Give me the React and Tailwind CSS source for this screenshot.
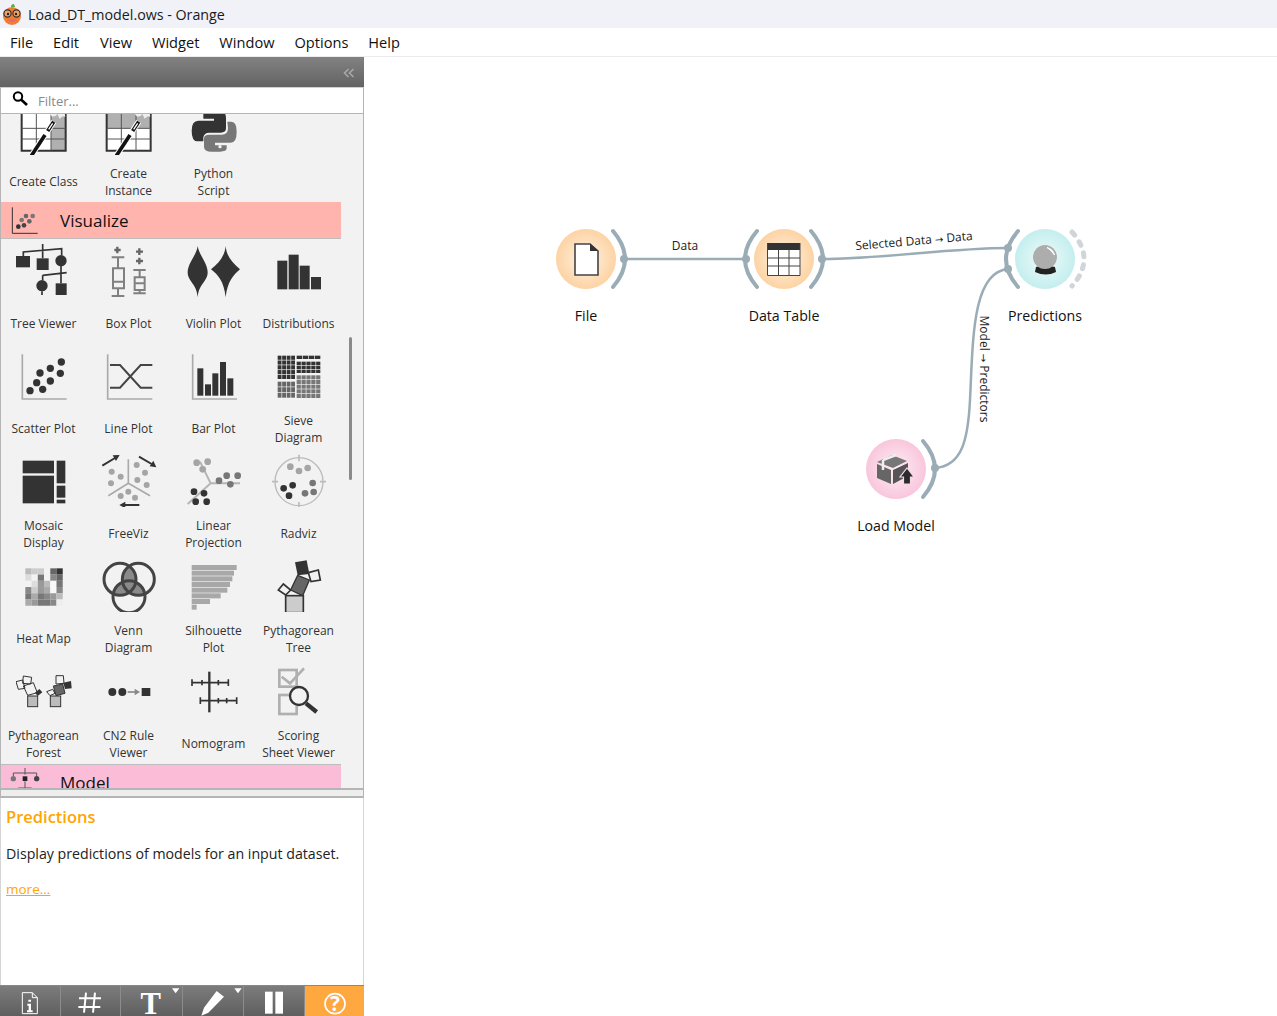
const D = "#333";
const G = "#aaa";
const ARROW = "'DejaVu Sans', sans-serif";
const LABEL = "'Open Sans', sans-serif";

function Icon({ x, y, children }) {
  return (
    <svg viewBox={`${x} ${y} 168 168`} className="w-[56px] h-[56px] shrink-0" fill="none">
      {children}
    </svg>
  );
}

function Grid({ x, y, w, h, nx, ny, fill }) {
  const cells = [];
  const cw = w / nx;
  const ch = h / ny;
  for (let i = 0; i < nx; i++) {
    for (let j = 0; j < ny; j++) {
      cells.push(<rect key={`${i}-${j}`} x={x + i * cw} y={y + j * ch} width={cw - 2} height={ch - 2} fill={fill} />);
    }
  }
  return <g>{cells}</g>;
}

const heat = [
  ["#bbb", "#ccc", "#ccc", "#f2f2f2", "#666", "#333"],
  ["#ddd", "#f2f2f2", "#777", "#f2f2f2", "#888", "#666"],
  ["#f2f2f2", "#ddd", "#999", "#bbb", "#f8f8f8", "#777"],
  ["#888", "#ccc", "#999", "#aaa", "#f8f8f8", "#888"],
  ["#777", "#aaa", "#777", "#888", "#999", "#bbb"],
  ["#aaa", "#999", "#777", "#777", "#888", "#eee"],
];

function CreateTable({ x0, shaded }) {
  return (
    <g>
      <rect x={x0} y="340" width="132" height="112" fill="#fff" />
      {shaded === "col" && <rect x={x0 + 88} y="340" width="44" height="112" fill="#b0b0b0" />}
      {shaded === "row" && <rect x={x0} y="340" width="132" height="45" fill="#b0b0b0" />}
      <path d={`M${x0} 340V452H${x0 + 132}V340`} stroke={D} strokeWidth="6" />
      <path d={`M${x0} 385H${x0 + 132}M${x0} 417H${x0 + 132}M${x0 + 44} 340V452M${x0 + 88} 340V452`} stroke="#555" strokeWidth="3" />
      <path d={`M${x0 + 26} 472L${x0 + 96} 365`} stroke="#fff" strokeWidth="17" />
      <path d={`M${x0 + 26} 472L${x0 + 70} 405`} stroke="#111" strokeWidth="11" />
      <path d={`M${x0 + 78} 393L${x0 + 96} 365`} stroke="#111" strokeWidth="11" />
      <path d={`M${x0 + 81} 388L${x0 + 93} 370`} stroke="#fff" strokeWidth="4" />
      <path d={`M${x0 + 82} 340l10 10 11-3 5 -7zM${x0 + 106} 340l8 16 9-7 8 1 -2-10z`} fill="#eee" />
    </g>
  );
}

const rows = [
  [
    { label: ["Create Class"], icon: <Icon x={48} y={297}><CreateTable x0={65} shaded="col" /></Icon> },
    { label: ["Create", "Instance"], icon: <Icon x={303} y={297}><CreateTable x0={320} shaded="row" /></Icon> },
    {
      label: ["Python", "Script"],
      icon: (
        <Icon x={558} y={297}>
          <path d="M610 340H672Q678 340 678 355V385Q678 398 662 398H628Q612 398 610 412V424H592Q575 424 575 392Q575 362 595 362H642V356H610Z" fill={D} />
          <path d="M682 365H694Q710 365 710 395Q710 428 692 428H645V436H680V445Q680 455 660 455H635Q612 455 612 440V415Q612 404 628 404H665Q684 404 684 385Z" fill="#777" />
          <circle cx="660" cy="440" r="5" fill="#f2f2f2" />
        </Icon>
      ),
    },
    null,
  ],
];

const vizRows = [
  [
    {
      label: ["Tree Viewer"],
      icon: (
        <Icon x={48} y={3}>
          <g stroke={D} strokeWidth="5">
            <path d="M128 12V55M70 48V36L185 26V46M183 78V130M128 106L200 98M128 106V120M126 154V165" />
          </g>
          <rect x="48" y="48" width="42" height="34" fill={D} />
          <rect x="110" y="55" width="36" height="35" fill={D} />
          <circle cx="183" cy="62" r="17" fill={D} />
          <circle cx="126" cy="137" r="17" fill={D} />
          <rect x="167" y="130" width="33" height="35" fill={D} />
        </Icon>
      ),
    },
    {
      label: ["Box Plot"],
      icon: (
        <Icon x={303} y={3}>
          <path d="M343 30H362M352 20V40" stroke="#666" strokeWidth="7" />
          <path d="M335 52H373M354 52V85M339 85H372V145H339ZM339 125H372M354 145V168M335 168H373" stroke="#808080" strokeWidth="6" />
          <path d="M408 35H429M418 25V45M408 63H429M418 53V73" stroke="#666" strokeWidth="7" />
          <path d="M400 90H437M419 90V112M404 112H434V150H404ZM404 130H434M419 150V160M400 160H437" stroke="#808080" strokeWidth="6" />
        </Icon>
      ),
    },
    {
      label: ["Violin Plot"],
      icon: (
        <Icon x={558} y={3}>
          <path d="M593 18C597 45 623 70 623 97C623 125 597 130 593 172C590 130 563 125 563 97C563 70 590 45 593 18Z" fill={D} />
          <path d="M677 18C680 50 695 65 720 88C700 105 682 125 677 172C672 125 655 105 633 88C655 70 674 50 677 18Z" fill={D} />
        </Icon>
      ),
    },
    {
      label: ["Distributions"],
      icon: (
        <Icon x={813} y={3}>
          <rect x="832" y="62" width="30" height="86" fill={D} />
          <rect x="866" y="44" width="30" height="104" fill={D} />
          <rect x="899" y="77" width="30" height="71" fill={D} />
          <rect x="933" y="111" width="30" height="37" fill={D} />
        </Icon>
      ),
    },
  ],
  [
    {
      label: ["Scatter Plot"],
      icon: (
        <Icon x={48} y={318}>
          <path d="M67 343V477H200" stroke={G} strokeWidth="5" />
          {[[90, 452], [128, 448], [110, 428], [151, 423], [120, 399], [151, 385], [181, 400], [184, 366]].map(([cx, cy]) => (
            <circle key={cx + "-" + cy} cx={cx} cy={cy} r="11" fill={D} />
          ))}
        </Icon>
      ),
    },
    {
      label: ["Line Plot"],
      icon: (
        <Icon x={303} y={318}>
          <path d="M323 343V477H457" stroke={G} strokeWidth="5" />
          <path d="M330 375H360L422 443H457M330 443H360L422 375H457" stroke="#444" strokeWidth="6" />
        </Icon>
      ),
    },
    {
      label: ["Bar Plot"],
      icon: (
        <Icon x={558} y={318}>
          <path d="M578 343V477H711" stroke={G} strokeWidth="5" />
          <rect x="592" y="385" width="18" height="82" fill={D} />
          <rect x="615" y="433" width="18" height="34" fill={D} />
          <rect x="637" y="400" width="18" height="67" fill={D} />
          <rect x="660" y="366" width="18" height="101" fill={D} />
          <rect x="682" y="415" width="18" height="52" fill={D} />
        </Icon>
      ),
    },
    {
      label: ["Sieve", "Diagram"],
      icon: (
        <Icon x={813} y={318}>
          <Grid x={833} y={347} w={54} h={72} nx={4} ny={5} fill={D} />
          <Grid x={890} y={347} w={73} h={12} nx={4} ny={1} fill={D} />
          <Grid x={890} y={365} w={73} h={36} nx={5} ny={3} fill={D} />
          <Grid x={833} y={425} w={54} h={50} nx={4} ny={3} fill="#666" />
          <Grid x={890} y={406} w={73} h={70} nx={5} ny={5} fill="#777" />
        </Icon>
      ),
    },
  ],
  [
    {
      label: ["Mosaic", "Display"],
      icon: (
        <Icon x={48} y={3}>
          <rect x="68" y="32" width="94" height="38" fill={D} />
          <rect x="68" y="77" width="94" height="83" fill={D} />
          <rect x="170" y="32" width="26" height="68" fill={D} />
          <rect x="170" y="107" width="26" height="36" fill={D} />
          <rect x="170" y="149" width="26" height="11" fill={D} />
        </Icon>
      ),
    },
    {
      label: ["FreeViz"],
      icon: (
        <Icon x={303} y={3}>
          <path d="M385 28V100L325 137M385 100L450 137" stroke={G} strokeWidth="5" />
          {[[335, 65], [362, 80], [333, 100], [410, 45], [435, 68], [412, 90], [440, 105], [385, 125], [362, 138], [405, 143]].map(([cx, cy]) => (
            <circle key={cx} cx={cx} cy={cy} r="9" fill="#a5a5a5" />
          ))}
          <path d="M307 47L345 24M417 20L455 42M418 165H372" stroke={D} strokeWidth="6" />
          <path d="M359 15L338 16L348 33ZM469 52L460 32L449 49ZM358 165L376 155V175Z" fill={D} />
        </Icon>
      ),
    },
    {
      label: ["Linear", "Projection"],
      icon: (
        <Icon x={558} y={3}>
          <path d="M600 35L632 100M632 100H720M632 100L563 162" stroke="#b5b5b5" strokeWidth="6" />
          {[[590, 38], [623, 35], [608, 58]].map(([cx, cy]) => <circle key={cx} cx={cx} cy={cy} r="10" fill="#a5a5a5" />)}
          {[[657, 92], [680, 77], [713, 77], [691, 103]].map(([cx, cy]) => <circle key={cx} cx={cx} cy={cy} r="10" fill="#777" />)}
          {[[582, 125], [612, 130], [587, 155], [620, 155]].map(([cx, cy]) => <circle key={cx} cx={cx} cy={cy} r="10" fill={D} />)}
        </Icon>
      ),
    },
    {
      label: ["Radviz"],
      icon: (
        <Icon x={813} y={3}>
          <circle cx="897" cy="95" r="72" stroke="#bbb" strokeWidth="4" />
          <path d="M897 14V34M897 156V176M816 95H834M960 95H978" stroke="#bbb" strokeWidth="5" />
          {[[871, 50], [897, 63], [923, 54]].map(([cx, cy]) => <circle key={cx} cx={cx} cy={cy} r="10" fill="#a5a5a5" />)}
          {[[851, 115], [878, 106], [867, 137]].map(([cx, cy]) => <circle key={cx} cx={cx} cy={cy} r="10" fill={D} />)}
          {[[938, 99], [915, 130], [941, 126]].map(([cx, cy]) => <circle key={cx} cx={cx} cy={cy} r="10" fill="#777" />)}
        </Icon>
      ),
    },
  ],
  [
    {
      label: ["Heat Map"],
      icon: (
        <Icon x={48} y={318}>
          {heat.map((row, j) =>
            row.map((c, i) => <rect key={`${i}-${j}`} x={76 + i * 18.7} y={355 + j * 18.7} width="18.7" height="18.7" fill={c} />)
          )}
        </Icon>
      ),
    },
    {
      label: ["Venn", "Diagram"],
      icon: (
        <Icon x={303} y={318}>
          <defs>
            <clipPath id="vl"><circle cx="360" cy="388" r="48" /></clipPath>
            <clipPath id="vr"><circle cx="415" cy="388" r="48" /></clipPath>
          </defs>
          <circle cx="415" cy="388" r="48" fill="#8a8a8a" clipPath="url(#vl)" />
          <circle cx="387" cy="440" r="48" fill="#8a8a8a" clipPath="url(#vl)" />
          <circle cx="387" cy="440" r="48" fill="#8a8a8a" clipPath="url(#vr)" />
          <circle cx="360" cy="388" r="48" stroke="#444" strokeWidth="9" />
          <circle cx="415" cy="388" r="48" stroke="#444" strokeWidth="9" />
          <circle cx="387" cy="440" r="48" stroke="#444" strokeWidth="9" />
        </Icon>
      ),
    },
    {
      label: ["Silhouette", "Plot"],
      icon: (
        <Icon x={558} y={318}>
          {[135, 127, 122, 115, 107, 87, 55, 15].map((w, i) => (
            <rect key={i} x="575" y={345 + i * 17} width={w} height="15" fill="#a8a8a8" />
          ))}
        </Icon>
      ),
    },
    {
      label: ["Pythagorean", "Tree"],
      icon: (
        <Icon x={813} y={318}>
          <path d="M885 337L920 331L928 372L893 376Z" fill={D} />
          <path d="M893 376L928 390L908 437L872 420Z" fill="#666" stroke={D} strokeWidth="4" />
          <path d="M925 368L955 360L961 390L933 395Z" stroke={D} strokeWidth="5" />
          <path d="M850 402L872 420L857 435L835 420Z" stroke={D} strokeWidth="5" />
          <rect x="857" y="437" width="53" height="51" fill="#ccc" stroke={D} strokeWidth="5" />
        </Icon>
      ),
    },
  ],
  [
    {
      label: ["Pythagorean", "Forest"],
      icon: (
        <Icon x={48} y={3}>
          <g stroke={D} strokeWidth="3">
            <rect x="83" y="108" width="30" height="32" fill="#bbb" />
            <path d="M70 78L100 68L112 98L83 106Z" />
            <path d="M48 65L68 60L75 85L55 88Z" />
            <path d="M70 48L95 52L92 72L68 70Z" />
            <rect x="151" y="108" width="31" height="32" fill="#bbb" />
            <path d="M160 78L188 72L195 100L168 107Z" fill="#666" />
            <path d="M168 47L190 47L192 70L168 72Z" />
            <path d="M140 95L158 88L165 100L150 107Z" />
          </g>
          <path d="M105 98L118 87L127 97L113 108ZM190 68L213 63L215 85L195 87Z" fill={D} />
        </Icon>
      ),
    },
    {
      label: ["CN2 Rule", "Viewer"],
      icon: (
        <Icon x={303} y={3}>
          <circle cx="337" cy="96" r="12" fill={D} />
          <circle cx="367" cy="96" r="12" fill={D} />
          <path d="M383 96H408" stroke="#888" strokeWidth="5" />
          <path d="M420 96L404 86V106Z" fill="#888" />
          <rect x="425" y="84" width="26" height="24" fill={D} />
        </Icon>
      ),
    },
    {
      label: ["Nomogram"],
      icon: (
        <Icon x={558} y={3}>
          <path d="M628 35V157" stroke={D} strokeWidth="7" />
          <path d="M575 68H687M600 122H712M576 58V78M606 60V76M655 60V76M685 58V78M601 112V132M655 114V130M680 114V130M710 112V132" stroke={D} strokeWidth="5" />
        </Icon>
      ),
    },
    {
      label: ["Scoring", "Sheet Viewer"],
      icon: (
        <Icon x={813} y={3}>
          <rect x="838" y="30" width="52" height="50" stroke="#b0b0b0" strokeWidth="8" />
          <rect x="838" y="105" width="52" height="57" stroke="#b0b0b0" strokeWidth="8" />
          <path d="M845 50L870 70L912 25" stroke="#b0b0b0" strokeWidth="8" />
          <circle cx="897" cy="108" r="27" fill="#f2f2f2" stroke={D} strokeWidth="7" />
          <path d="M918 130L950 156" stroke={D} strokeWidth="13" />
        </Icon>
      ),
    },
  ],
];

function Cell({ item }) {
  return (
    <div className="w-[85px] h-[105px] flex flex-col items-center pt-[2px]">
      {item && item.icon}
      {item && (
        <div className="mt-[9px] h-[35px] w-full flex flex-col items-center justify-center text-[12px] leading-[17px] text-[#333] whitespace-nowrap">
          {item.label.map((l) => (
            <span key={l}>{l}</span>
          ))}
        </div>
      )}
    </div>
  );
}

function Row({ items }) {
  return (
    <div className="flex">
      {items.map((item, i) => (
        <Cell key={i} item={item} />
      ))}
    </div>
  );
}

function NodeLabel({ className, children }) {
  return <div className={"absolute text-[14.2px] text-[#111] whitespace-nowrap -translate-x-1/2 leading-[20px] " + className}>{children}</div>;
}

function Arc({ d, dashed }) {
  return <path d={d} fill="none" stroke={dashed ? "#cfd5d9" : "#9aacb6"} strokeWidth={dashed ? 5 : 4} strokeLinecap="round" strokeDasharray={dashed ? "4 8" : undefined} />;
}

function Canvas() {
  return (
    <div className="relative flex-1 bg-white">
      {/* canvas svg uses page coordinates, main area starts at y=57 and x=364 */}
      <svg viewBox="364 57 913 959" className="absolute inset-0 w-full h-full" fill="none">
        <defs>
          <radialGradient id="orangeNode">
            <stop offset="0%" stopColor="#fef3e6" />
            <stop offset="100%" stopColor="#fdd3a3" />
          </radialGradient>
          <radialGradient id="cyanNode">
            <stop offset="0%" stopColor="#f0fbfb" />
            <stop offset="100%" stopColor="#c4eeee" />
          </radialGradient>
          <radialGradient id="pinkNode">
            <stop offset="0%" stopColor="#fdeef5" />
            <stop offset="100%" stopColor="#f9c6dc" />
          </radialGradient>
        </defs>

        <path d="M625 259H745" stroke="#9aacb6" strokeWidth="2.5" />
        <path d="M822 259C880 259 950 248 1008 248" stroke="#9aacb6" strokeWidth="2.5" />
        <path d="M935 468C962 466 968 440 970 400C973 340 972 272 1008 269" stroke="#9aacb6" strokeWidth="2.5" />

        <circle cx="586" cy="259" r="30" fill="url(#orangeNode)" />
        <circle cx="784" cy="259" r="30" fill="url(#orangeNode)" />
        <circle cx="1045" cy="259" r="30" fill="url(#cyanNode)" />
        <circle cx="896" cy="469" r="30" fill="url(#pinkNode)" />

        <Arc d="M613 231Q637 259 613 287" />
        <Arc d="M757 231Q733 259 757 287" />
        <Arc d="M811 231Q835 259 811 287" />
        <Arc d="M1018 231Q994 259 1018 287" />
        <Arc d="M1072 232Q1096 259 1072 286" dashed />
        <Arc d="M923 441Q947 469 923 497" />

        {[[624, 259], [746, 259], [822, 259], [1008, 248], [1008, 269], [935, 468]].map(([cx, cy]) => (
          <circle key={cx + "-" + cy} cx={cx} cy={cy} r="4" fill="#9aacb6" />
        ))}

        {/* File */}
        <path d="M575 244H590L598 251V275H575Z" fill="#fff" stroke="#444" strokeWidth="1.6" />
        <path d="M590 243.5L598.5 251H590Z" fill="#333" />

        {/* Data Table */}
        <rect x="767" y="243" width="33" height="33" fill="#fff" />
        <rect x="767" y="243" width="33" height="7" fill="#333" />
        <path d="M767.5 243V275.5H800V243M767.5 258H800M767.5 266H800M778.5 250V275.5M789 250V275.5" stroke="#444" strokeWidth="1" />

        {/* Predictions */}
        <path d="M1036 267Q1045 264 1055 267L1056 272Q1046 277 1035 272Z" fill="#222" />
        <circle cx="1045" cy="257" r="12" fill="#adadad" />
        <path d="M1047 247.5Q1053 249 1054.5 255Q1051 250 1047 247.5Z" fill="#fff" stroke="#fff" strokeWidth="1" />

        {/* Load Model */}
        <path d="M877 462L892 455L907 461L893 468Z" fill="#777" />
        <path d="M877 464L891 470V484L877 478Z" fill="#666" />
        <path d="M893 470L908 463V476L893 484Z" fill="#555" />
        <path d="M883 460L896 455" stroke="#eee" strokeWidth="2.5" />
        <path d="M883 460V470" stroke="#eee" strokeWidth="2.5" />
        <path d="M907 468L914 477H910.5V484H903.5V477H900Z" fill="#2b2b2b" stroke="#f9d5e5" strokeWidth="1.2" />

        <text x="685" y="250" textAnchor="middle" fontSize="12" fill="#222" fontFamily={LABEL}>Data</text>
        <text x="914" y="245" textAnchor="middle" fontSize="12" fill="#222" fontFamily={LABEL} transform="rotate(-5 914 241)">
          Selected Data <tspan fontFamily={ARROW} fontSize="10">→</tspan> Data
        </text>
        <text x="980" y="369" textAnchor="middle" fontSize="12" fill="#222" fontFamily={LABEL} transform="rotate(90 980 369)">
          Model <tspan fontFamily={ARROW} fontSize="10">→</tspan> Predictors
        </text>
      </svg>
      <NodeLabel className="left-[222px] top-[249px]">File</NodeLabel>
      <NodeLabel className="left-[420px] top-[249px]">Data Table</NodeLabel>
      <NodeLabel className="left-[681px] top-[249px]">Predictions</NodeLabel>
      <NodeLabel className="left-[532px] top-[459px]">Load Model</NodeLabel>
    </div>
  );
}

function ToolButton({ x, w, active, children }) {
  return (
    <div className={`h-full shrink-0 ${active ? "bg-[#ffa840]" : "border-r border-[#8c8c8c]"}`}>
      <svg viewBox={`${x} 75 ${w} 93`} width={w / 3} height="31" fill="none" className="block">
        {children}
      </svg>
    </div>
  );
}

function Toolbar() {
  return (
    <div className="h-[31px] flex bg-gradient-to-b from-[#7c7c7c] to-[#5f5f5f] border-t border-[#888] overflow-hidden">
      <ToolButton x={0} w={180}>
        <path d="M67 95H97L112 110V158H67Z" stroke="#fff" strokeWidth="3" />
        <path d="M97 95V110H112" stroke="#fff" strokeWidth="3" />
        <path d="M85 116H93V122H85ZM82 128H93V148H98V154H81V148H86V134H82Z" fill="#fff" />
      </ToolButton>
      <ToolButton x={183} w={177}>
        <path d="M258 95L252 155M285 95L279 155M237 112H303M235 138H301" stroke="#fff" strokeWidth="6" />
      </ToolButton>
      <ToolButton x={363} w={183}>
        <text x="452" y="160" textAnchor="middle" fontSize="92" fontWeight="700" fill="#fff" fontFamily="'Liberation Serif', serif">T</text>
        <path d="M516 82H538L527 97Z" fill="#fff" />
      </ToolButton>
      <ToolButton x={549} w={180}>
        <path d="M650 90L672 107L625 155L604 164L612 140Z" fill="#fff" />
        <path d="M703 82H725L714 97Z" fill="#fff" />
      </ToolButton>
      <ToolButton x={732} w={180}>
        <rect x="795" y="92" width="23" height="66" fill="#fff" />
        <rect x="826" y="92" width="23" height="66" fill="#fff" />
      </ToolButton>
      <ToolButton x={915} w={177} active>
        <circle cx="1005" cy="128" r="30" stroke="#fff" strokeWidth="5" />
        <text x="1005" y="150" textAnchor="middle" fontSize="62" fontWeight="700" fill="#fff" fontFamily={LABEL}>?</text>
      </ToolButton>
    </div>
  );
}

function Sidebar() {
  return (
    <aside className="w-[364px] shrink-0 flex flex-col bg-[#f2f2f2]">
      <div className="h-[30px] shrink-0 bg-gradient-to-b from-[#828282] to-[#636363] flex items-center justify-end pr-[9px]">
        <svg viewBox="0 0 12 10" className="w-[12px] h-[10px] mt-[1px]" fill="none">
          <path d="M5.5 1L1.5 5L5.5 9M10.5 1L6.5 5L10.5 9" stroke="#a8a8a8" strokeWidth="1.6" />
        </svg>
      </div>
      <div className="h-[27px] shrink-0 bg-white border border-[#b5b5b5] border-t-[#d0d0d0] flex items-center pl-[11px] gap-[10px]">
        <svg viewBox="0 0 16 15" className="w-[16px] h-[15px] -mt-[4px]" fill="none">
          <circle cx="6" cy="5.5" r="4.2" stroke="#000" strokeWidth="2" />
          <path d="M9 8.5L15 14" stroke="#000" strokeWidth="2.6" />
        </svg>
        <span className="text-[13px] text-[#8a8a8a] mt-[3px]">Filter...</span>
      </div>
      <div className="h-[674px] shrink-0 flex border-l border-r border-[#b5b5b5] overflow-hidden">
        <div className="w-[340px] shrink-0 overflow-hidden">
          <div className="-mt-[17px]">
            {rows.map((r, i) => (
              <Row key={i} items={r} />
            ))}
            <div className="h-[37px] bg-[#ffb4ae] border-b border-[#bdbdbd] flex items-center pl-[9px] gap-[20px]">
              <svg viewBox="30 615 90 90" className="w-[30px] h-[30px]" fill="none">
                <path d="M37 622V700H113" stroke="#333" strokeWidth="3" />
                <circle cx="55" cy="680" r="7" fill="#333" />
                <circle cx="72" cy="676" r="7" fill="#444" />
                <circle cx="65" cy="660" r="7" fill="#777" />
                <circle cx="88" cy="664" r="7" fill="#666" />
                <circle cx="78" cy="648" r="7" fill="#666" />
                <circle cx="98" cy="648" r="7" fill="#777" />
              </svg>
              <span className="text-[17px] text-[#111] mt-[1px]">Visualize</span>
            </div>
            {vizRows.map((r, i) => (
              <Row key={i} items={r} />
            ))}
            <div className="h-[37px] bg-[#fbbcd8] border-t border-[#bdbdbd] flex items-center pl-[9px] gap-[20px]">
              <svg viewBox="30 325 90 90" className="w-[30px] h-[30px]" fill="none">
                <path d="M75 325V345M40 350V340H110V350M75 365V385M55 385H95V412H55Z" stroke="#555" strokeWidth="3" />
                <circle cx="40" cy="357" r="8" fill="#777" />
                <rect x="68" y="350" width="14" height="14" fill="#222" />
                <circle cx="110" cy="357" r="8" fill="#444" />
              </svg>
              <span className="text-[17px] text-[#111]">Model</span>
            </div>
          </div>
        </div>
        <div className="flex-1 flex justify-center">
          <div className="w-[3px] h-[143px] mt-[223px] -ml-[3px] bg-[#8a8a8a] rounded-full" />
        </div>
      </div>
      <div className="h-[10px] shrink-0 border-y-2 border-x border-[#b5b5b5] bg-[#eeeeee]" />
      <div className="flex-1 bg-white border-r border-l border-[#d5d5d5] pl-[5px] flex flex-col">
        <div className="text-[16.5px] font-semibold text-[#ffa500] mt-[7px] leading-[24px]">Predictions</div>
        <div className="text-[14.2px] text-[#222] mt-[15px] leading-[20px] whitespace-nowrap">Display predictions of models for an input dataset.</div>
        <div className="text-[13.5px] text-[#ffa500] underline mt-[15px] leading-[20px]">more...</div>
      </div>
      <Toolbar />
    </aside>
  );
}

export default function App() {
  return (
    <div className="w-[1277px] h-[1016px] flex flex-col overflow-hidden bg-white font-['Open_Sans',sans-serif]">
      <div className="h-[28px] shrink-0 bg-[#f0f2f8] flex items-center pl-[1px] gap-[5px]">
        <svg viewBox="0 0 22 22" className="w-[22px] h-[22px]">
          <path d="M10 4Q10 1 13 1L14 4Z" fill="#4fae4a" />
          <circle cx="11" cy="13" r="9" fill="#ef7d33" />
          <circle cx="6.5" cy="10.5" r="3.6" fill="#f4a261" stroke="#333" strokeWidth="1.2" />
          <circle cx="15.5" cy="10.5" r="3.6" fill="#f4a261" stroke="#333" strokeWidth="1.2" />
          <circle cx="7" cy="11" r="1.2" fill="#222" />
          <circle cx="15" cy="11" r="1.2" fill="#222" />
          <path d="M6 16Q11 21 16 16Q11 17 6 16Z" fill="#e0657d" />
        </svg>
        <span className="text-[14.25px] text-[#1a1a1a] mt-[1px]">Load_DT_model.ows - Orange</span>
      </div>
      <div className="h-[29px] shrink-0 bg-white border-b border-[#ececec] flex items-center pt-[1px] text-[14.6px] text-[#111]">
        <span className="ml-[10px]">File</span>
        <span className="ml-[20px]">Edit</span>
        <span className="ml-[21px]">View</span>
        <span className="ml-[20px]">Widget</span>
        <span className="ml-[20px]">Window</span>
        <span className="ml-[20px]">Options</span>
        <span className="ml-[20px]">Help</span>
      </div>
      <div className="flex-1 flex min-h-0">
        <Sidebar />
        <Canvas />
      </div>
    </div>
  );
}
